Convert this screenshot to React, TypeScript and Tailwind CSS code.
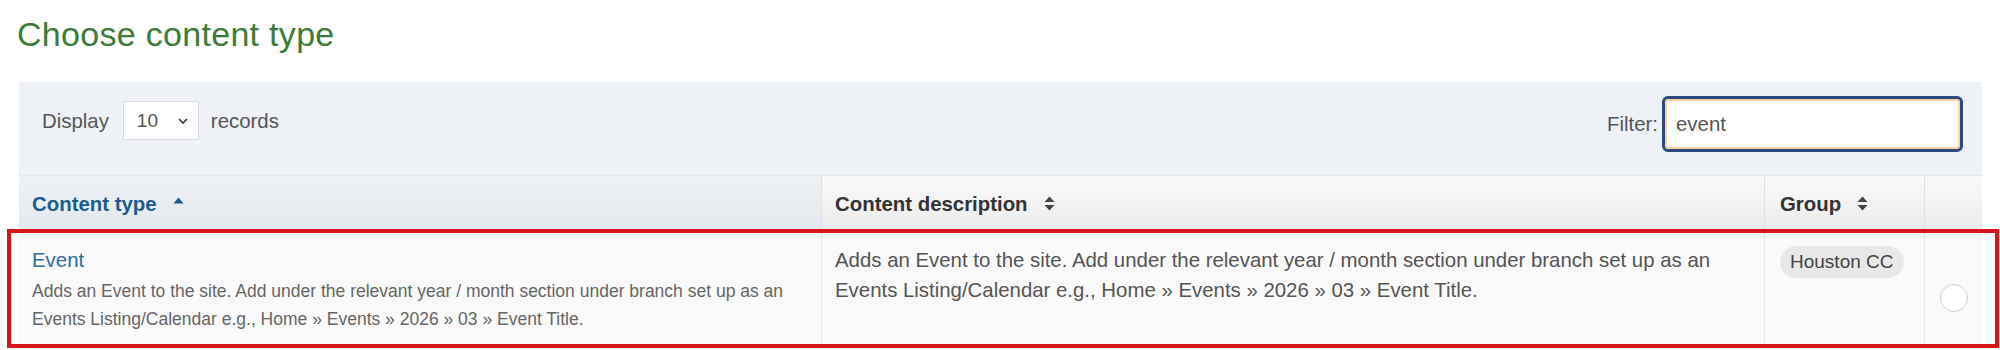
import React from "react";

function SortBoth() {
  return (
    <svg width="11" height="15" viewBox="0 0 11 15" className="ml-[16px] shrink-0">
      <polygon points="0.5,6 5.5,0.5 10.5,6" fill="#444" />
      <polygon points="0.5,9 5.5,14.5 10.5,9" fill="#444" />
    </svg>
  );
}

function SortUp() {
  return (
    <svg width="11" height="7" viewBox="0 0 11 7" className="ml-[16px] shrink-0 -mt-[6px]">
      <polygon points="0.5,6.5 5.5,0.5 10.5,6.5" fill="#1d5a8e" />
    </svg>
  );
}

export default function App() {
  return (
    <div className="bg-white w-[2000px] h-[350px] overflow-hidden font-['Liberation_Sans',Arial,sans-serif]">
      <h1 className="ml-[17px] mt-[17px] text-[34px] leading-[34px] tracking-[0.3px] text-[#3d7b39] font-normal">
        Choose content type
      </h1>

      <div className="ml-[19px] mt-[31px] w-[1963px]">
        {/* filter bar */}
        <div className="h-[94px] bg-[#eef2f7] flex justify-between items-start pt-[14px] pl-[23px] pr-[19px] border-b border-[#e3e7ec]">
          <div className="flex items-center mt-[5px] text-[20.4px] leading-[24px] text-[#555]">
            <span>Display</span>
            <div className="ml-[14px] w-[76px] h-[39px] bg-white border border-[#dcdcdc] flex items-center pl-[13px] pr-[10px] justify-between">
              <span className="text-[19px] leading-[24px] text-[#555]">10</span>
              <svg width="10" height="6" viewBox="0 0 10 6">
                <polyline points="1,1 5,5 9,1" fill="none" stroke="#333" strokeWidth="1.6" />
              </svg>
            </div>
            <span className="ml-[12px]">records</span>
          </div>
          <div className="flex items-center text-[20.4px] leading-[24px] text-[#555]">
            <span>Filter:</span>
            <div className="ml-[4px] w-[301px] h-[56px] bg-white border-[3px] border-[#2b4a80] rounded-[6px] shadow-[inset_0_0_0_2px_#fbd2a3] flex items-center pl-[11px]">
              <span className="text-[#555]">event</span>
            </div>
          </div>
        </div>

        {/* header */}
        <div className="grid grid-cols-[803px_943px_160px_57px] h-[55px] text-[20.4px] leading-[24px] font-bold">
          <div className="flex items-center px-[13px] bg-gradient-to-b from-[#eef2f6] to-[#e3e8ee] border-r border-[#dde1e5] text-[#1d5a8e]">
            <span>Content type</span>
            <SortUp />
          </div>
          <div className="flex items-center px-[13px] bg-gradient-to-b from-[#fafafa] to-[#ebebeb] border-r border-[#e0e0e0] text-[#333]">
            <span>Content description</span>
            <SortBoth />
          </div>
          <div className="flex items-center px-[15px] bg-gradient-to-b from-[#fafafa] to-[#ebebeb] border-r border-[#e0e0e0] text-[#333]">
            <span>Group</span>
            <SortBoth />
          </div>
          <div className="bg-gradient-to-b from-[#fafafa] to-[#ebebeb]" />
        </div>

        {/* body row */}
        <div className="relative grid grid-cols-[803px_943px_160px_57px] h-[114px] bg-[#fafafa]">
          <div className="px-[13px] pt-[14px] border-r border-[#e6e6e6]">
            <div className="text-[20.4px] leading-[30px] text-[#2e6da4]">Event</div>
            <div className="mt-[2px] text-[17.5px] leading-[28px] text-[#666]">
              Adds an Event to the site. Add under the relevant year / month section under branch set up as an Events Listing/Calendar e.g., Home » Events » 2026 » 03 » Event Title.
            </div>
          </div>
          <div className="px-[13px] pt-[14px] border-r border-[#e6e6e6] text-[20.4px] leading-[30px] text-[#555]">
            Adds an Event to the site. Add under the relevant year / month section under branch set up as an Events Listing/Calendar e.g., Home » Events » 2026 » 03 » Event Title.
          </div>
          <div className="pl-[15px] pt-[15px] border-r border-[#e6e6e6]">
            <span className="inline-flex items-center h-[32px] px-[10px] rounded-full bg-[#e8e8e8] text-[19px] leading-[24px] text-[#444]">
              Houston CC
            </span>
          </div>
          <div className="flex justify-center pt-[53px]">
            <div className="w-[28px] h-[28px] rounded-full bg-white border-[1.5px] border-[#cfcfcf]" />
          </div>

          <div className="absolute left-[-12px] right-[-17px] top-[-2px] bottom-[-3px] border-[4px] border-[#d8141b] pointer-events-none" />
        </div>
      </div>
    </div>
  );
}
